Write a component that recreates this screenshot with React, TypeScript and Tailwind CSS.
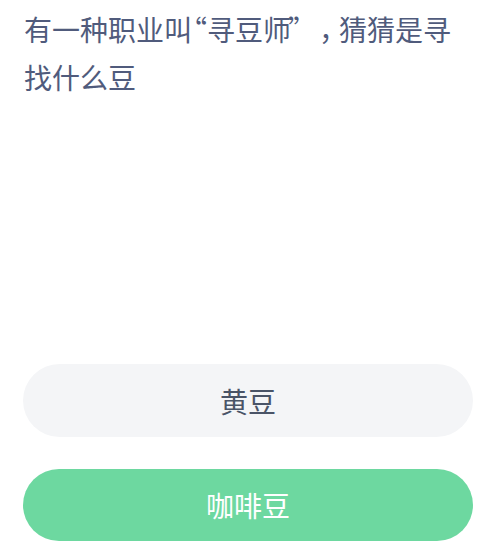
export default function App() {
  return (
    <div className="flex h-[555px] w-[489px] flex-col bg-white font-['Noto_Sans_CJK_SC','Noto_Sans',sans-serif]">
      <div className="pl-[24px] pr-[16px] pt-[5px] text-[28px] leading-[48px] text-[#505b7c] [text-spacing-trim:space-all]">
        有一种职业叫
        <span className="-ml-[13px]">“</span>
        寻豆师
        <span className="-ml-[3px] tracking-[-13px]">”</span>
        <span className="pl-[16px] tracking-[-8px]">，</span>
        猜猜是寻找什么豆
      </div>
      <div className="mt-auto flex flex-col gap-[32px] pb-[14px] pl-[23px] pr-[16px]">
        <div className="flex h-[73px] items-center justify-center rounded-full bg-[#f4f5f7] text-[28px] text-[#4a5467]">
          黄豆
        </div>
        <div className="flex h-[72px] items-center justify-center rounded-full bg-[#6dd8a0] text-[28px] text-white">
          咖啡豆
        </div>
      </div>
    </div>
  );
}
